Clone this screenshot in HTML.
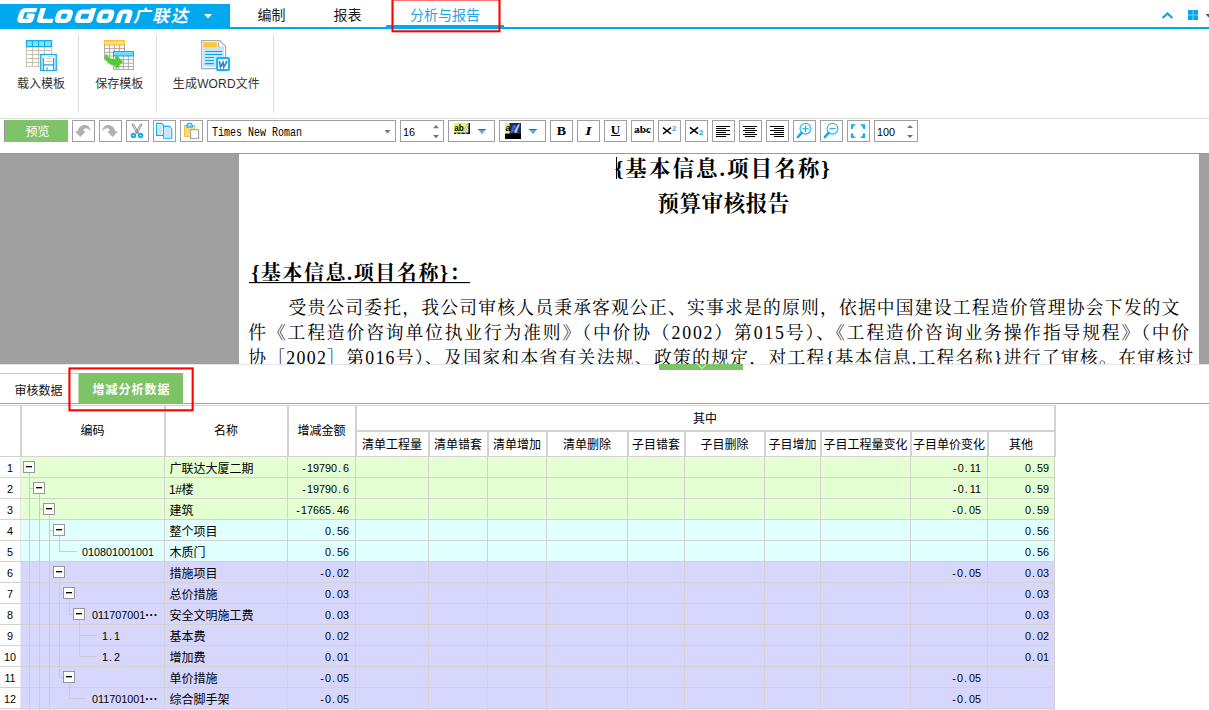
<!DOCTYPE html>
<html lang="zh-CN"><head><meta charset="utf-8"><title>Glodon</title>
<style>
*{box-sizing:border-box;margin:0;padding:0}
html,body{width:1209px;height:710px;overflow:hidden;background:#fff}
body{position:relative;font-family:"Liberation Sans",sans-serif;font-size:12px;color:#000}
.a{position:absolute}
.t{position:absolute;white-space:nowrap;line-height:1}
.ui{font-family:"Liberation Sans",sans-serif}
.sf{font-family:"Liberation Serif",serif}
.mn{font-family:"Liberation Mono",monospace;font-size:12px;display:inline-block;transform:scaleX(.8333)}
.btn{position:absolute;top:120px;width:23px;height:22px;border:1px solid #A0A0A0;background:#fff}
.btn svg{position:absolute;left:0;top:0}
.vl{position:absolute;width:1px;background:#D3D2D1}
.hl{position:absolute;height:1px;background:#D3D2D1}
.tl{position:absolute;background:#CDCDCD}
.bx{position:absolute;width:12px;height:12px;border:1px solid #979797;background:#fff}
.bx i{position:absolute;left:2px;top:4px;width:6px;height:1px;background:#000;display:block;box-shadow:0 1px 0 rgba(0,0,0,.35)}
.el{letter-spacing:-2.4px}
.n{font-family:"Liberation Sans",sans-serif;font-size:10.8px;letter-spacing:0;color:#000}
.n b{display:inline-block;width:6px;text-align:left;padding-left:1px;font-weight:normal}
.n em{display:inline-block;width:6px;text-align:center;font-style:normal}
.n i{display:inline-block;width:12px;text-align:center;font-style:normal;font-weight:bold;font-size:12px;line-height:10px;letter-spacing:0.3px}
.hd{position:absolute;text-align:center;white-space:nowrap;line-height:14px;font-size:12px}
.nm{position:absolute;left:170px;white-space:nowrap;line-height:14px;font-size:12px}
.num{position:absolute;text-align:right;white-space:nowrap;line-height:14px;height:14px}
.num .mn{transform-origin:right center}
.cd .mn{transform-origin:left center}
.cd{position:absolute;white-space:nowrap;line-height:14px;height:14px}
.rn{position:absolute;left:0;width:20px;text-align:center;line-height:14px;height:14px}
.rn .mn{transform-origin:center center}
.g{position:absolute;line-height:1;font-family:"Liberation Sans","Noto Sans CJK SC",sans-serif}
.g svg{position:absolute;left:0;top:0;overflow:visible}
.g svg text{font-family:"Liberation Sans","Noto Sans CJK SC",sans-serif;white-space:pre}
.g svg text.se{font-family:"Liberation Serif","Noto Serif CJK SC",serif}
</style></head>
<body>
<div class="a" style="left:0;top:4px;width:230px;height:25px;background:#00A8EE"></div>
<div class="a" style="left:230px;top:27px;width:979px;height:2px;background:#00A8EE"></div>
<div class="a" style="left:386px;top:25px;width:118px;height:4px;background:#00A8EE"></div>
<svg class="a" style="left:0;top:4px" width="230" height="25" viewBox="0 4 230 25">
<g transform="translate(7.47,0) skewX(-18) scale(1.25,1)" fill="none" stroke="#fff" stroke-width="4.3" stroke-linejoin="round" stroke-linecap="butt">
<path d="M26,10.15 H17.3 Q14.9,10.15 14.9,13 V18 Q14.9,20.85 17.3,20.85 H23.7 V15.7 H19.4"/>
<path d="M30.8,8 V18.4 Q30.8,20.85 33,20.85 H41.8"/>
<path d="M47.3,11.7 H51.5 Q53.8,11.7 53.8,14.8 V18.2 Q53.8,20.85 51.5,20.85 H47.3 Q45,20.85 45,18.2 V14.8 Q45,11.7 47.3,11.7 Z"/>
<path d="M71.2,8 V20.85 H63.2 Q60.9,20.85 60.9,18.2 V14.8 Q60.9,11.7 63.2,11.7 H71.2"/>
<path d="M80.5,11.7 H84.6 Q86.9,11.7 86.9,14.8 V18.2 Q86.9,20.85 84.6,20.85 H80.5 Q78.2,20.85 78.2,18.2 V14.8 Q78.2,11.7 80.5,11.7 Z"/>
<path d="M94,23 V14.8 Q94,11.7 96.3,11.7 H99.2 Q101.5,11.7 101.5,14.8 V23"/>
</g>
<path d="M204,14 h8 l-4,4.5 z" fill="#fff"/>
</svg>
<div class="g" style="left:131px;top:-2px;width:61px;height:36px;font-size:17px"><svg width="61" height="36"><text transform="translate(0,24.06) skewX(-14)" x="2.3" y="0" font-size="17" font-weight="bold" letter-spacing="1.7" fill="#fff">广联达</text></svg></div>
<div class="g" style="left:256px;top:0px;width:32px;height:30px;font-size:14px"><svg width="32" height="30"><text x="1.4" y="20.22" font-size="14" fill="#1a1a1a">编制</text></svg></div>
<div class="g" style="left:332px;top:0px;width:32px;height:30px;font-size:14px"><svg width="32" height="30"><text x="1.6" y="20.22" font-size="14" fill="#1a1a1a">报表</text></svg></div>
<div class="g" style="left:409px;top:0px;width:74px;height:30px;font-size:14px"><svg width="74" height="30"><text x="1" y="20.22" font-size="14" fill="#1EA3E6">分析与报告</text></svg></div>
<svg class="a" style="left:385px;top:0" width="125" height="40"><rect x="7.5" y="-0.5" width="107" height="31.8" fill="none" stroke="#FF0000" stroke-width="2.1"/></svg>
<svg class="a" style="left:1155px;top:5px" width="54" height="20" viewBox="1155 5 54 20">
<path d="M1162.6,18 L1167.5,13.4 L1172.4,18" fill="none" stroke="#00A8EE" stroke-width="2.2"/>
<rect x="1188" y="10" width="10" height="10" fill="#7FD0F4"/>
<rect x="1188" y="10" width="4.5" height="4.5" fill="#00A8EE"/><rect x="1193.5" y="10" width="4.5" height="4.5" fill="#00A8EE"/>
<rect x="1188" y="15.5" width="4.5" height="4.5" fill="#00A8EE"/><rect x="1193.5" y="15.5" width="4.5" height="4.5" fill="#00A8EE"/>
<path d="M1205.5,14 h6 l-3,3.5 z" fill="#5A5A6A"/>
</svg>
<div class="a" style="left:78px;top:34px;width:1px;height:79px;background:#DEDEDE"></div>
<div class="a" style="left:156px;top:34px;width:1px;height:79px;background:#DEDEDE"></div>
<div class="a" style="left:273px;top:34px;width:1px;height:79px;background:#DEDEDE"></div>
<div class="a" style="left:0;top:118px;width:1209px;height:1px;background:#E0E0E0"></div>
<div class="g" style="left:16px;top:71px;width:52px;height:26px;font-size:12px"><svg width="52" height="26"><text x="1" y="17.46" font-size="12" fill="#333">载入模板</text></svg></div>
<div class="g" style="left:94px;top:71px;width:52px;height:26px;font-size:12px"><svg width="52" height="26"><text x="1.2" y="17.46" font-size="12" fill="#333">保存模板</text></svg></div>
<div class="g" style="left:171px;top:71px;width:92px;height:26px;font-size:12px"><svg width="92" height="26"><text x="1.85" y="17.46" font-size="12" fill="#333" textLength="87" lengthAdjust="spacing">生成WORD文件</text></svg></div>
<svg class="a" style="left:20px;top:36px" width="220" height="40" viewBox="20 36 220 40">
<!-- icon1 -->
<rect x="26.4" y="46.6" width="25.3" height="20" fill="#fff" stroke="#C8BEAC" stroke-width="1"/>
<path d="M26.4,50.5 h25.3 M26.4,54.5 h25.3 M26.4,58.5 h25.3 M26.4,62.5 h25.3 M32.4,46.6 v20 M38.5,46.6 v20 M44.6,46.6 v20" stroke="#C8BEAC" stroke-width="1" fill="none"/>
<rect x="26.5" y="40.6" width="25" height="6" fill="#86E0FF" stroke="#12B0F0" stroke-width="1.3"/>
<path d="M32.4,40.6 v6 M38.5,40.6 v6 M44.6,40.6 v6" stroke="#12B0F0" stroke-width="1.2"/>
<rect x="40.75" y="54.55" width="15.5" height="15.9" fill="#FDF1EA" stroke="#12B0F0" stroke-width="1.3"/>
<rect x="44.2" y="55.3" width="8.6" height="9" fill="#fff"/>
<path d="M48,56.6 h4.4 M46,58.6 h6 M46,61.4 h6" stroke="#C8BEAC" stroke-width="0.8"/>
<rect x="44.2" y="65.7" width="8.6" height="4.2" fill="#fff"/>
<rect x="46.3" y="67.2" width="1.7" height="2.8" fill="#BFB3A0"/>
<path d="M43.4,58 V70 M53.6,58 V70 M43.4,64.9 H53.6" stroke="#12B0F0" stroke-width="1.4" fill="none"/>
<!-- icon2 -->
<rect x="104.5" y="44.8" width="20" height="14.8" fill="#fff" stroke="#ABABAB" stroke-width="1"/>
<path d="M104.5,48.6 h20 M104.5,52.3 h20 M104.5,56 h20 M109.4,44.8 v14.8 M114.4,44.8 v14.8 M119.4,44.8 v14.8" stroke="#ABABAB" stroke-width="1" fill="none"/>
<rect x="104.5" y="40.5" width="20" height="4.4" fill="#FFDD78" stroke="#FDBE3C" stroke-width="1"/>
<rect x="113.5" y="55.8" width="20" height="13.8" fill="#fff" stroke="#ABABAB" stroke-width="1"/>
<path d="M113.5,59.6 h20 M113.5,63.2 h20 M113.5,66.5 h20 M118.5,55.8 v13.8 M123.4,55.8 v13.8 M128.4,55.8 v13.8" stroke="#ABABAB" stroke-width="1" fill="none"/>
<rect x="113.5" y="51.5" width="20" height="4.4" fill="#6FDBFF" stroke="#12B0F0" stroke-width="1"/>
<path d="M106.4,54 C107.5,57.6 111,59.7 115.4,59.4 L115.8,55 L122.7,61.8 L116,68.9 L115.6,65.2 C110,65.6 105.8,62 105,56.8 Z" fill="#52CC33" stroke="#52CC33" stroke-width="0.6" stroke-linejoin="round"/>
<!-- icon3 -->
<path d="M201.7,40.7 H219.8 L225.6,46.4 V68.6 H201.7 Z" fill="#fff" stroke="#ABABAB" stroke-width="1.2"/>
<path d="M218.5,42.2 V47.3 H223.8" fill="none" stroke="#ABABAB" stroke-width="1"/>
<path d="M203.1,47 H218.5 V47.3 H224.1 V66.8 H203.1 Z" fill="#C5E6F5"/>
<rect x="203.1" y="42.2" width="13.8" height="4.9" fill="#FFC43A"/>
<path d="M205.1,51.5 h17 M205.1,54.5 h17 M205.1,57.5 h8.8 M205.1,60.5 h8.8 M205.1,63.6 h8.8" stroke="#0AA0EE" stroke-width="1.1"/>
<rect x="217.1" y="57.9" width="11.9" height="12.2" rx="1.2" fill="#fff" stroke="#12B4F5" stroke-width="2"/>
<path d="M219.4,61 l1.1,6.2 l2.5,-4.8 l0.7,4.8 l3.4,-6.2" fill="none" stroke="#3F7FC5" stroke-width="1.7" stroke-linejoin="miter"/>
</svg>
<div class="a" style="left:4px;top:120px;width:64px;height:22px;background:#7FC369"></div>
<div class="a" style="left:4px;top:120px;width:1px;height:22px;background:#9C92A6"></div>
<div class="g" style="left:24px;top:119px;width:28px;height:26px;font-size:12px"><svg width="28" height="26"><text x="1.5" y="17.06" font-size="12" fill="#fff">预览</text></svg></div>
<div class="btn" style="left:72px;width:23px"><svg width="21" height="20" viewBox="0 0 21 20"><path d="M2,10.2 L12.9,10.2 L7.3,15.9 Z M4.8,10.4 C5,6.5 8.5,3.8 12,3.9 C15.2,4 17.4,6.6 17.9,10.2 C16,7.7 13.8,7 12.3,7.3 C10.9,7.7 10.4,9 10.4,10.4 Z" fill="#B0B0B0"/></svg></div>
<div class="btn" style="left:99px;width:23px"><svg width="21" height="20" viewBox="0 0 21 20"><path transform="translate(20,0) scale(-1,1)" d="M2,10.2 L12.9,10.2 L7.3,15.9 Z M4.8,10.4 C5,6.5 8.5,3.8 12,3.9 C15.2,4 17.4,6.6 17.9,10.2 C16,7.7 13.8,7 12.3,7.3 C10.9,7.7 10.4,9 10.4,10.4 Z" fill="#B0B0B0"/></svg></div>
<div class="btn" style="left:126px;width:23px"><svg width="21" height="20" viewBox="0 0 21 20"><path d="M5,3.2 L6.5,3.2 L11.4,11.6 L9.6,12.2 Z M15,3.2 L13.5,3.2 L8.6,11.6 L10.4,12.2 Z" fill="#fff" stroke="#7E7E86" stroke-width="0.9" stroke-linejoin="round"/><circle cx="6.4" cy="14.5" r="1.8" fill="#fff" stroke="#12A8EE" stroke-width="1.9"/><circle cx="13.5" cy="14.5" r="1.8" fill="#fff" stroke="#12A8EE" stroke-width="1.9"/></svg></div>
<div class="btn" style="left:153px;width:23px"><svg width="21" height="20" viewBox="0 0 21 20"><path d="M2.6,2.4 H7.4 L9.8,4.8 V14.4 H2.6 Z" fill="#fff" stroke="#12A8EE" stroke-width="1.1"/><path d="M4,3.8 H7 L8.4,5.4 V12.8 H4 Z" fill="#BFE7F8"/><path d="M9.7,5.4 H15.2 L17.7,7.9 V17.3 H9.7 Z" fill="#fff" stroke="#12A8EE" stroke-width="1.1"/><path d="M11.1,6.8 H14.6 L16.3,8.5 V15.9 H11.1 Z" fill="#BFE7F8"/></svg></div>
<div class="btn" style="left:180px;width:23px"><svg width="21" height="20" viewBox="0 0 21 20"><rect x="3.5" y="4.4" width="10.2" height="11.2" fill="#FFD874" stroke="#F9BD3C" stroke-width="1"/><path d="M6.6,2.3 H10.6 L11.6,6.1 H5.6 Z" fill="#9FDDF8" stroke="#12A8EE" stroke-width="1"/><rect x="9.6" y="8.7" width="8" height="8.8" fill="#fff" stroke="#A8A8A8" stroke-width="1.2"/></svg></div>
<div class="btn" style="left:207px;width:189px"></div>
<div class="cd" style="left:212px;top:125px"><span class="mn">Times New Roman</span></div>
<svg class="a" style="left:384px;top:129px" width="7" height="5"><path d="M0.5,1 h6 l-3,3.4 z" fill="#6E7488"/></svg>
<div class="btn" style="left:400px;width:44px"></div>
<div class="cd" style="left:403px;top:125px"><span class="n">16</span></div>
<svg class="a" style="left:432px;top:124px" width="8" height="15"><path d="M1,4.2 l3,-3.2 l3,3.2 z M1,11 l3,3.2 l3,-3.2 z" fill="#6E7488"/></svg>
<div class="btn" style="left:448px;width:47px"></div>
<svg class="a" style="left:454px;top:123px" width="34" height="17" viewBox="0 0 34 17">
<rect x="0" y="0" width="16" height="11" fill="#F6F05E"/><rect x="0" y="9.6" width="16" height="1.4" fill="#14143C"/><rect x="14.3" y="0" width="1.7" height="11" fill="#14143C"/>
<text x="0.2" y="8.4" font-family="Liberation Sans,sans-serif" font-size="9.5" font-weight="bold" fill="#000" textLength="9.5" lengthAdjust="spacingAndGlyphs">ab</text>
<path d="M9.2,9.4 L12.6,2.2 L14.4,0.8 L14,3 L10.8,10 Z" fill="#fff" stroke="#7F97CE" stroke-width="0.7"/><path d="M2,10.3 h2 M6,10.3 h1.6 M11,10.3 h1.4" stroke="#F6F05E" stroke-width="0.9"/>
<path d="M23.8,6 h8.4 l-4.2,5.2 z" fill="#5FA9DC"/><path d="M23.8,6 h8.4 l-0.9,1.1 h-6.6 z" fill="#2D6A9F"/></svg>
<div class="btn" style="left:499px;width:47px"></div>
<svg class="a" style="left:505px;top:123px" width="34" height="17" viewBox="0 0 34 17">
<rect x="0" y="0" width="16" height="11" fill="#F6F05E"/><rect x="4.6" y="0" width="11.4" height="11" fill="#1A2C66"/><rect x="0" y="10.6" width="16" height="5.4" fill="#000"/>
<text x="0.2" y="8.4" font-family="Liberation Sans,sans-serif" font-size="9.5" font-weight="bold" fill="#000">a</text>
<text x="5.2" y="9.6" font-family="Liberation Sans,sans-serif" font-size="11" font-weight="bold" fill="#4D6FB8">A</text>
<path d="M9.4,9.2 L12.8,2.2 L14.4,0.8 L14,3 L11,9.8 Z" fill="#DDE6F6" stroke="#8FA4D8" stroke-width="0.6"/>
<path d="M23.8,6 h8.4 l-4.2,5.2 z" fill="#5FA9DC"/><path d="M23.8,6 h8.4 l-0.9,1.1 h-6.6 z" fill="#2D6A9F"/></svg>
<div class="btn" style="left:550px;width:23px"><div class="t sf" style="left:0;width:21px;text-align:center;top:4px;font-size:12.5px;font-weight:bold;transform:scaleX(1.12)">B</div></div>
<div class="btn" style="left:577px;width:23px"><div class="t sf" style="left:0;width:21px;text-align:center;top:4px;font-size:12.5px;font-weight:bold;font-style:italic;transform:scaleX(1.3)">I</div></div>
<div class="btn" style="left:604px;width:23px"><div class="t sf" style="left:0;width:21px;text-align:center;top:2px;font-size:13px;font-weight:bold">U</div><div class="a" style="left:6px;top:14px;width:9px;height:1px;background:#000"></div></div>
<div class="btn" style="left:631px;width:23px"><div class="t sf" style="left:0;width:21px;text-align:center;top:4px;font-size:10.5px;font-weight:bold;transform:scaleX(1.08)">abc</div><div class="a" style="left:3px;top:10px;width:15px;height:1px;background:#555"></div></div>
<div class="btn" style="left:658px;width:23px"><svg width="21" height="20" viewBox="0 0 21 20"><path d="M4,6.7 L12,13 M12,6.7 L4,13" stroke="#000" stroke-width="1.5"/><text x="13" y="9.6" font-family="Liberation Sans,sans-serif" font-size="7.5" font-weight="bold" fill="#12A8EE">2</text></svg></div>
<div class="btn" style="left:685px;width:23px"><svg width="21" height="20" viewBox="0 0 21 20"><path d="M4,6.3 L12,12.6 M12,6.3 L4,12.6" stroke="#000" stroke-width="1.5"/><text x="13" y="13.8" font-family="Liberation Sans,sans-serif" font-size="7.5" font-weight="bold" fill="#12A8EE">2</text></svg></div>
<div class="btn" style="left:712px;width:23px"><svg width="21" height="20" viewBox="0 0 21 20"><path d="M3.4,5.5 H16.6 M3.4,7.5 H12.6 M3.4,9.5 H16.6 M3.4,11.5 H12.6 M3.4,13.5 H16.6 M3.4,15.5 H12.6 " stroke="#000" stroke-width="1.1" stroke-linecap="round"/></svg></div>
<div class="btn" style="left:739px;width:23px"><svg width="21" height="20" viewBox="0 0 21 20"><path d="M3.4,5.5 H16.6 M5.4,7.5 H14.6 M3.4,9.5 H16.6 M5.4,11.5 H14.6 M3.4,13.5 H16.6 M5.4,15.5 H14.6 " stroke="#000" stroke-width="1.1" stroke-linecap="round"/></svg></div>
<div class="btn" style="left:766px;width:23px"><svg width="21" height="20" viewBox="0 0 21 20"><path d="M3.4,5.5 H16.6 M7.4,7.5 H16.6 M3.4,9.5 H16.6 M7.4,11.5 H16.6 M3.4,13.5 H16.6 M7.4,15.5 H16.6 " stroke="#000" stroke-width="1.1" stroke-linecap="round"/></svg></div>
<div class="btn" style="left:793px;width:23px"><svg width="21" height="20" viewBox="0 0 21 20"><circle cx="11.5" cy="7.7" r="5.4" fill="#fff" stroke="#35B6F2" stroke-width="1.2"/><path d="M7.6,11.9 L3.9,16" stroke="#12A8EE" stroke-width="2.6" stroke-linecap="round"/><path d="M8.3,7.7 h6.4 M11.5,4.5 v6.4" stroke="#12A8EE" stroke-width="1.1"/></svg></div>
<div class="btn" style="left:820px;width:23px"><svg width="21" height="20" viewBox="0 0 21 20"><circle cx="11.5" cy="7.7" r="5.4" fill="#fff" stroke="#35B6F2" stroke-width="1.2"/><path d="M7.6,11.9 L3.9,16" stroke="#12A8EE" stroke-width="2.6" stroke-linecap="round"/><path d="M8.3,7.7 h6.4" stroke="#12A8EE" stroke-width="1.1"/></svg></div>
<div class="btn" style="left:847px;width:23px"><svg width="21" height="20" viewBox="0 0 21 20"><g fill="#17B0F0"><path d="M2.9,3.2 H8 Q5.2,4.6 4.6,8 H2.9 Z"/><path transform="translate(19.9,0) scale(-1,1)" d="M2.9,3.2 H8 Q5.2,4.6 4.6,8 H2.9 Z"/><path transform="translate(0,20.2) scale(1,-1)" d="M2.9,3.2 H8 Q5.2,4.6 4.6,8 H2.9 Z"/><path transform="translate(19.9,20.2) scale(-1,-1)" d="M2.9,3.2 H8 Q5.2,4.6 4.6,8 H2.9 Z"/></g></svg></div>
<div class="btn" style="left:874px;width:44px"></div>
<div class="cd" style="left:877px;top:125px"><span class="n">100</span></div>
<svg class="a" style="left:906px;top:124px" width="8" height="15"><path d="M1,4 l3,-3 l3,3 z M1,11 l3,3 l3,-3 z" fill="#6E7488"/></svg>
<div class="a" style="left:0;top:153px;width:1209px;height:211px;background:#A0A0A0;border-top:1px solid #9A9A9A;overflow:hidden"><div class="a" style="left:239px;top:0;width:960px;height:211px;background:#fff;overflow:hidden"><div class="a" style="left:377px;top:3px;width:1px;height:22px;background:#000"></div><div class="g" style="left:372px;top:-8px;width:224px;height:45px;font-size:21.6px"><svg width="224" height="45"><text class="se" x="3.8" y="29.81" font-size="21.6" font-weight="bold" fill="#000" textLength="215" lengthAdjust="spacing">{基本信息.项目名称}</text></svg></div><div class="g" style="left:417px;top:26px;width:137px;height:45px;font-size:21.6px"><svg width="137" height="45"><text class="se" x="1.3" y="30.51" font-size="21.6" font-weight="bold" letter-spacing="0.5" fill="#000">预算审核报告</text></svg></div><div class="g" style="left:8px;top:98px;width:226px;height:42px;font-size:20px"><svg width="226" height="42"><text class="se" x="4.4" y="27.7" font-size="20" font-weight="bold" fill="#000" textLength="218" lengthAdjust="spacing">{基本信息.项目名称}：</text></svg></div><div class="a" style="left:10px;top:128px;width:221px;height:1px;background:#000"></div><div class="a" style="left:10px;top:129px;width:221px;height:1px;background:rgba(0,0,0,.15)"></div><div class="g" style="left:47px;top:135px;width:896px;height:37px;font-size:17.8px"><svg width="896" height="37"><text class="se" x="2.4" y="25.16" font-size="17.8" fill="#000" textLength="891" lengthAdjust="spacing">受贵公司委托，我公司审核人员秉承客观公正、实事求是的原则，依据中国建设工程造价管理协会下发的文</text></svg></div><div class="g" style="left:7px;top:160px;width:947px;height:37px;font-size:17.8px"><svg width="947" height="37"><text class="se" x="2.3" y="25.26" font-size="17.8" fill="#000" textLength="941" lengthAdjust="spacing">件《工程造价咨询单位执业行为准则》（中价协（2002）第015号）、《工程造价咨询业务操作指导规程》（中价</text></svg></div><div class="g" style="left:7px;top:185px;width:950px;height:37px;font-size:17.8px"><svg width="950" height="37"><text class="se" x="2.2" y="25.36" font-size="17.8" fill="#000" textLength="945" lengthAdjust="spacing">协［2002］第016号）、及国家和本省有关法规、政策的规定，对工程{基本信息.工程名称}进行了审核。在审核过</text></svg></div></div></div>
<div class="a" style="left:659px;top:364px;width:84px;height:6px;background:#7FC369"></div>
<svg class="a" style="left:696px;top:364px" width="12" height="6"><path d="M2,0.6 L6,4.6 L10,0.6" fill="none" stroke="#fff" stroke-width="1"/></svg>
<div class="a" style="left:0;top:364px;width:659px;height:1px;background:#E6E6E6"></div>
<div class="a" style="left:743px;top:364px;width:466px;height:1px;background:#E6E6E6"></div>
<div class="a" style="left:0;top:373px;width:78px;height:1px;background:#B2E29C"></div>
<div class="a" style="left:78px;top:373px;width:1px;height:30px;background:#B4E0A4"></div>
<div class="a" style="left:79px;top:373px;width:104px;height:30px;background:#7FC369"></div>
<div class="a" style="left:0;top:403px;width:1209px;height:1px;background:#7FC369"></div>
<div class="g" style="left:13px;top:378px;width:52px;height:26px;font-size:12px"><svg width="52" height="26"><text x="1.5" y="16.76" font-size="12" fill="#111">审核数据</text></svg></div>
<div class="g" style="left:91px;top:377px;width:82px;height:26px;font-size:12px"><svg width="82" height="26"><text x="1.5" y="17.46" font-size="12" font-weight="bold" letter-spacing="1" fill="#fff">增减分析数据</text></svg></div>
<div class="a" style="left:21px;top:457px;width:1033px;height:21px;background:#E4FFD2"></div>
<div class="a" style="left:21px;top:478px;width:1033px;height:21px;background:#E4FFD2"></div>
<div class="a" style="left:21px;top:499px;width:1033px;height:21px;background:#E4FFD2"></div>
<div class="a" style="left:21px;top:520px;width:1033px;height:21px;background:#E0FFFF"></div>
<div class="a" style="left:21px;top:541px;width:1033px;height:21px;background:#E0FFFF"></div>
<div class="a" style="left:21px;top:562px;width:1033px;height:21px;background:#D7D7FE"></div>
<div class="a" style="left:21px;top:583px;width:1033px;height:21px;background:#D7D7FE"></div>
<div class="a" style="left:21px;top:604px;width:1033px;height:21px;background:#D7D7FE"></div>
<div class="a" style="left:21px;top:625px;width:1033px;height:21px;background:#D7D7FE"></div>
<div class="a" style="left:21px;top:646px;width:1033px;height:21px;background:#D7D7FE"></div>
<div class="a" style="left:21px;top:667px;width:1033px;height:21px;background:#D7D7FE"></div>
<div class="a" style="left:21px;top:688px;width:1033px;height:21px;background:#D7D7FE"></div>
<div class="a" style="left:21px;top:709px;width:1033px;height:1px;background:#FDE0F6"></div>
<div class="a" style="left:0;top:405px;width:1055px;height:1px;background:#D2D2D2"></div>
<div class="a" style="left:20px;top:405px;width:2px;height:52px;background:#D2D2D2"></div>
<div class="a" style="left:164px;top:405px;width:2px;height:52px;background:#D2D2D2"></div>
<div class="a" style="left:287px;top:405px;width:2px;height:52px;background:#D2D2D2"></div>
<div class="a" style="left:355px;top:405px;width:2px;height:52px;background:#D2D2D2"></div>
<div class="a" style="left:428px;top:431px;width:2px;height:26px;background:#D2D2D2"></div>
<div class="a" style="left:487px;top:431px;width:2px;height:26px;background:#D2D2D2"></div>
<div class="a" style="left:546px;top:431px;width:2px;height:26px;background:#D2D2D2"></div>
<div class="a" style="left:627px;top:431px;width:2px;height:26px;background:#D2D2D2"></div>
<div class="a" style="left:684px;top:431px;width:2px;height:26px;background:#D2D2D2"></div>
<div class="a" style="left:764px;top:431px;width:2px;height:26px;background:#D2D2D2"></div>
<div class="a" style="left:820px;top:431px;width:2px;height:26px;background:#D2D2D2"></div>
<div class="a" style="left:910px;top:431px;width:2px;height:26px;background:#D2D2D2"></div>
<div class="a" style="left:987px;top:431px;width:2px;height:26px;background:#D2D2D2"></div>
<div class="a" style="left:1054px;top:405px;width:2px;height:52px;background:#D2D2D2"></div>
<div class="a" style="left:356px;top:430px;width:699px;height:2px;background:#D2D2D2"></div>
<div class="a" style="left:0;top:456px;width:1055px;height:1px;background:#D2D2D2"></div>
<div class="vl" style="left:20px;top:457px;height:253px;background:#E6E6E6"></div>
<div class="vl" style="left:164px;top:457px;height:253px"></div>
<div class="vl" style="left:287px;top:457px;height:253px"></div>
<div class="vl" style="left:355px;top:457px;height:253px"></div>
<div class="vl" style="left:428px;top:457px;height:253px"></div>
<div class="vl" style="left:487px;top:457px;height:253px"></div>
<div class="vl" style="left:546px;top:457px;height:253px"></div>
<div class="vl" style="left:627px;top:457px;height:253px"></div>
<div class="vl" style="left:684px;top:457px;height:253px"></div>
<div class="vl" style="left:764px;top:457px;height:253px"></div>
<div class="vl" style="left:820px;top:457px;height:253px"></div>
<div class="vl" style="left:910px;top:457px;height:253px"></div>
<div class="vl" style="left:987px;top:457px;height:253px"></div>
<div class="vl" style="left:1054px;top:457px;height:253px"></div>
<div class="hl" style="left:0;top:477px;width:1055px"></div>
<div class="hl" style="left:0;top:498px;width:1055px"></div>
<div class="hl" style="left:0;top:519px;width:1055px"></div>
<div class="hl" style="left:0;top:540px;width:1055px"></div>
<div class="hl" style="left:0;top:561px;width:1055px"></div>
<div class="hl" style="left:0;top:582px;width:1055px"></div>
<div class="hl" style="left:0;top:603px;width:1055px"></div>
<div class="hl" style="left:0;top:624px;width:1055px"></div>
<div class="hl" style="left:0;top:645px;width:1055px"></div>
<div class="hl" style="left:0;top:666px;width:1055px"></div>
<div class="hl" style="left:0;top:687px;width:1055px"></div>
<div class="hl" style="left:0;top:708px;width:1055px"></div>
<div class="g" style="left:79px;top:418px;width:28px;height:26px;font-size:12px"><svg width="28" height="26"><text x="1.5" y="17.36" font-size="12" fill="#000">编码</text></svg></div>
<div class="g" style="left:213px;top:418px;width:28px;height:26px;font-size:12px"><svg width="28" height="26"><text x="1" y="17.36" font-size="12" fill="#000">名称</text></svg></div>
<div class="g" style="left:296px;top:418px;width:52px;height:26px;font-size:12px"><svg width="52" height="26"><text x="1.5" y="17.36" font-size="12" fill="#000">增减金额</text></svg></div>
<div class="g" style="left:692px;top:406px;width:28px;height:26px;font-size:12px"><svg width="28" height="26"><text x="1" y="16.76" font-size="12" fill="#000">其中</text></svg></div>
<div class="g" style="left:361px;top:432px;width:64px;height:26px;font-size:12px"><svg width="64" height="26"><text x="1" y="16.86" font-size="12" fill="#000">清单工程量</text></svg></div>
<div class="g" style="left:433px;top:432px;width:52px;height:26px;font-size:12px"><svg width="52" height="26"><text x="1" y="16.86" font-size="12" fill="#000">清单错套</text></svg></div>
<div class="g" style="left:492px;top:432px;width:52px;height:26px;font-size:12px"><svg width="52" height="26"><text x="1" y="16.86" font-size="12" fill="#000">清单增加</text></svg></div>
<div class="g" style="left:562px;top:432px;width:52px;height:26px;font-size:12px"><svg width="52" height="26"><text x="1" y="16.86" font-size="12" fill="#000">清单删除</text></svg></div>
<div class="g" style="left:631px;top:432px;width:52px;height:26px;font-size:12px"><svg width="52" height="26"><text x="1" y="16.86" font-size="12" fill="#000">子目错套</text></svg></div>
<div class="g" style="left:699px;top:432px;width:52px;height:26px;font-size:12px"><svg width="52" height="26"><text x="1.5" y="16.86" font-size="12" fill="#000">子目删除</text></svg></div>
<div class="g" style="left:767px;top:432px;width:52px;height:26px;font-size:12px"><svg width="52" height="26"><text x="1.5" y="16.86" font-size="12" fill="#000">子目增加</text></svg></div>
<div class="g" style="left:822px;top:432px;width:88px;height:26px;font-size:12px"><svg width="88" height="26"><text x="1.5" y="16.86" font-size="12" fill="#000">子目工程量变化</text></svg></div>
<div class="g" style="left:912px;top:432px;width:76px;height:26px;font-size:12px"><svg width="76" height="26"><text x="1" y="16.86" font-size="12" fill="#000">子目单价变化</text></svg></div>
<div class="g" style="left:1008px;top:432px;width:28px;height:26px;font-size:12px"><svg width="28" height="26"><text x="1" y="16.86" font-size="12" fill="#000">其他</text></svg></div>
<div class="tl" style="left:29px;top:473px;width:1px;height:237px"></div>
<div class="tl" style="left:39px;top:494px;width:1px;height:216px"></div>
<div class="tl" style="left:49px;top:515px;width:1px;height:195px"></div>
<div class="tl" style="left:59px;top:536px;width:1px;height:16px"></div>
<div class="tl" style="left:59px;top:578px;width:1px;height:100px"></div>
<div class="tl" style="left:69px;top:599px;width:1px;height:16px"></div>
<div class="tl" style="left:69px;top:683px;width:1px;height:16px"></div>
<div class="tl" style="left:79px;top:620px;width:1px;height:37px"></div>
<div class="tl" style="left:29px;top:488px;width:4px;height:1px"></div>
<div class="tl" style="left:39px;top:509px;width:4px;height:1px"></div>
<div class="tl" style="left:49px;top:530px;width:4px;height:1px"></div>
<div class="tl" style="left:49px;top:572px;width:4px;height:1px"></div>
<div class="tl" style="left:59px;top:551px;width:18px;height:1px"></div>
<div class="tl" style="left:59px;top:593px;width:4px;height:1px"></div>
<div class="tl" style="left:59px;top:677px;width:4px;height:1px"></div>
<div class="tl" style="left:69px;top:614px;width:4px;height:1px"></div>
<div class="tl" style="left:79px;top:635px;width:18px;height:1px"></div>
<div class="tl" style="left:79px;top:656px;width:18px;height:1px"></div>
<div class="tl" style="left:69px;top:698px;width:17px;height:1px"></div>
<div class="bx" style="left:23px;top:461px"><i></i></div>
<div class="bx" style="left:33px;top:482px"><i></i></div>
<div class="bx" style="left:43px;top:503px"><i></i></div>
<div class="bx" style="left:53px;top:524px"><i></i></div>
<div class="bx" style="left:53px;top:566px"><i></i></div>
<div class="bx" style="left:63px;top:587px"><i></i></div>
<div class="bx" style="left:73px;top:608px"><i></i></div>
<div class="bx" style="left:63px;top:671px"><i></i></div>
<div class="rn" style="top:461px"><span class="n">1</span></div>
<div class="g" style="left:168px;top:456px;width:88px;height:26px;font-size:12px"><svg width="88" height="26"><text x="1.5" y="16.56" font-size="12" fill="#000">广联达大厦二期</text></svg></div>
<div class="num" style="left:259px;width:90px;top:461px"><span class="n"><em>-</em>19790<b>.</b>6</span></div>
<div class="num" style="left:891px;width:90px;top:461px"><span class="n"><em>-</em>0<b>.</b>11</span></div>
<div class="num" style="left:959px;width:90px;top:461px"><span class="n">0<b>.</b>59</span></div>
<div class="rn" style="top:482px"><span class="n">2</span></div>
<div class="g" style="left:168px;top:477px;width:28px;height:26px;font-size:12px"><svg width="28" height="26"><text x="1.1" y="16.56" font-size="12" fill="#000" textLength="24.4" lengthAdjust="spacing">1#楼</text></svg></div>
<div class="num" style="left:259px;width:90px;top:482px"><span class="n"><em>-</em>19790<b>.</b>6</span></div>
<div class="num" style="left:891px;width:90px;top:482px"><span class="n"><em>-</em>0<b>.</b>11</span></div>
<div class="num" style="left:959px;width:90px;top:482px"><span class="n">0<b>.</b>59</span></div>
<div class="rn" style="top:503px"><span class="n">3</span></div>
<div class="g" style="left:168px;top:498px;width:28px;height:26px;font-size:12px"><svg width="28" height="26"><text x="1.5" y="16.56" font-size="12" fill="#000">建筑</text></svg></div>
<div class="num" style="left:259px;width:90px;top:503px"><span class="n"><em>-</em>17665<b>.</b>46</span></div>
<div class="num" style="left:891px;width:90px;top:503px"><span class="n"><em>-</em>0<b>.</b>05</span></div>
<div class="num" style="left:959px;width:90px;top:503px"><span class="n">0<b>.</b>59</span></div>
<div class="rn" style="top:524px"><span class="n">4</span></div>
<div class="g" style="left:168px;top:519px;width:52px;height:26px;font-size:12px"><svg width="52" height="26"><text x="1.5" y="16.56" font-size="12" fill="#000">整个项目</text></svg></div>
<div class="num" style="left:259px;width:90px;top:524px"><span class="n">0<b>.</b>56</span></div>
<div class="num" style="left:959px;width:90px;top:524px"><span class="n">0<b>.</b>56</span></div>
<div class="rn" style="top:545px"><span class="n">5</span></div>
<div class="cd" style="left:82px;top:545px"><span class="n">010801001001</span></div>
<div class="g" style="left:168px;top:540px;width:40px;height:26px;font-size:12px"><svg width="40" height="26"><text x="1.5" y="16.56" font-size="12" fill="#000">木质门</text></svg></div>
<div class="num" style="left:259px;width:90px;top:545px"><span class="n">0<b>.</b>56</span></div>
<div class="num" style="left:959px;width:90px;top:545px"><span class="n">0<b>.</b>56</span></div>
<div class="rn" style="top:566px"><span class="n">6</span></div>
<div class="g" style="left:168px;top:561px;width:52px;height:26px;font-size:12px"><svg width="52" height="26"><text x="1.5" y="16.56" font-size="12" fill="#000">措施项目</text></svg></div>
<div class="num" style="left:259px;width:90px;top:566px"><span class="n"><em>-</em>0<b>.</b>02</span></div>
<div class="num" style="left:891px;width:90px;top:566px"><span class="n"><em>-</em>0<b>.</b>05</span></div>
<div class="num" style="left:959px;width:90px;top:566px"><span class="n">0<b>.</b>03</span></div>
<div class="rn" style="top:587px"><span class="n">7</span></div>
<div class="g" style="left:168px;top:582px;width:52px;height:26px;font-size:12px"><svg width="52" height="26"><text x="1.5" y="16.56" font-size="12" fill="#000">总价措施</text></svg></div>
<div class="num" style="left:259px;width:90px;top:587px"><span class="n">0<b>.</b>03</span></div>
<div class="num" style="left:959px;width:90px;top:587px"><span class="n">0<b>.</b>03</span></div>
<div class="rn" style="top:608px"><span class="n">8</span></div>
<div class="cd" style="left:92px;top:608px"><span class="n">011707001<i>···</i></span></div>
<div class="g" style="left:168px;top:603px;width:88px;height:26px;font-size:12px"><svg width="88" height="26"><text x="1.5" y="16.56" font-size="12" fill="#000">安全文明施工费</text></svg></div>
<div class="num" style="left:259px;width:90px;top:608px"><span class="n">0<b>.</b>03</span></div>
<div class="num" style="left:959px;width:90px;top:608px"><span class="n">0<b>.</b>03</span></div>
<div class="rn" style="top:629px"><span class="n">9</span></div>
<div class="cd" style="left:102px;top:629px"><span class="n">1<b>.</b>1</span></div>
<div class="g" style="left:168px;top:624px;width:40px;height:26px;font-size:12px"><svg width="40" height="26"><text x="1.5" y="16.56" font-size="12" fill="#000">基本费</text></svg></div>
<div class="num" style="left:259px;width:90px;top:629px"><span class="n">0<b>.</b>02</span></div>
<div class="num" style="left:959px;width:90px;top:629px"><span class="n">0<b>.</b>02</span></div>
<div class="rn" style="top:650px"><span class="n">10</span></div>
<div class="cd" style="left:102px;top:650px"><span class="n">1<b>.</b>2</span></div>
<div class="g" style="left:168px;top:645px;width:40px;height:26px;font-size:12px"><svg width="40" height="26"><text x="1.5" y="16.56" font-size="12" fill="#000">增加费</text></svg></div>
<div class="num" style="left:259px;width:90px;top:650px"><span class="n">0<b>.</b>01</span></div>
<div class="num" style="left:959px;width:90px;top:650px"><span class="n">0<b>.</b>01</span></div>
<div class="rn" style="top:671px"><span class="n">11</span></div>
<div class="g" style="left:168px;top:666px;width:52px;height:26px;font-size:12px"><svg width="52" height="26"><text x="1.5" y="16.56" font-size="12" fill="#000">单价措施</text></svg></div>
<div class="num" style="left:259px;width:90px;top:671px"><span class="n"><em>-</em>0<b>.</b>05</span></div>
<div class="num" style="left:891px;width:90px;top:671px"><span class="n"><em>-</em>0<b>.</b>05</span></div>
<div class="rn" style="top:692px"><span class="n">12</span></div>
<div class="cd" style="left:92px;top:692px"><span class="n">011701001<i>···</i></span></div>
<div class="g" style="left:168px;top:687px;width:64px;height:26px;font-size:12px"><svg width="64" height="26"><text x="1.5" y="16.56" font-size="12" fill="#000">综合脚手架</text></svg></div>
<div class="num" style="left:259px;width:90px;top:692px"><span class="n"><em>-</em>0<b>.</b>05</span></div>
<div class="num" style="left:891px;width:90px;top:692px"><span class="n"><em>-</em>0<b>.</b>05</span></div>
<svg class="a" style="left:60px;top:360px" width="145" height="60"><rect x="9.45" y="8.43" width="123.22" height="41.87" fill="none" stroke="#FF0000" stroke-width="2.1"/></svg>
</body></html>
